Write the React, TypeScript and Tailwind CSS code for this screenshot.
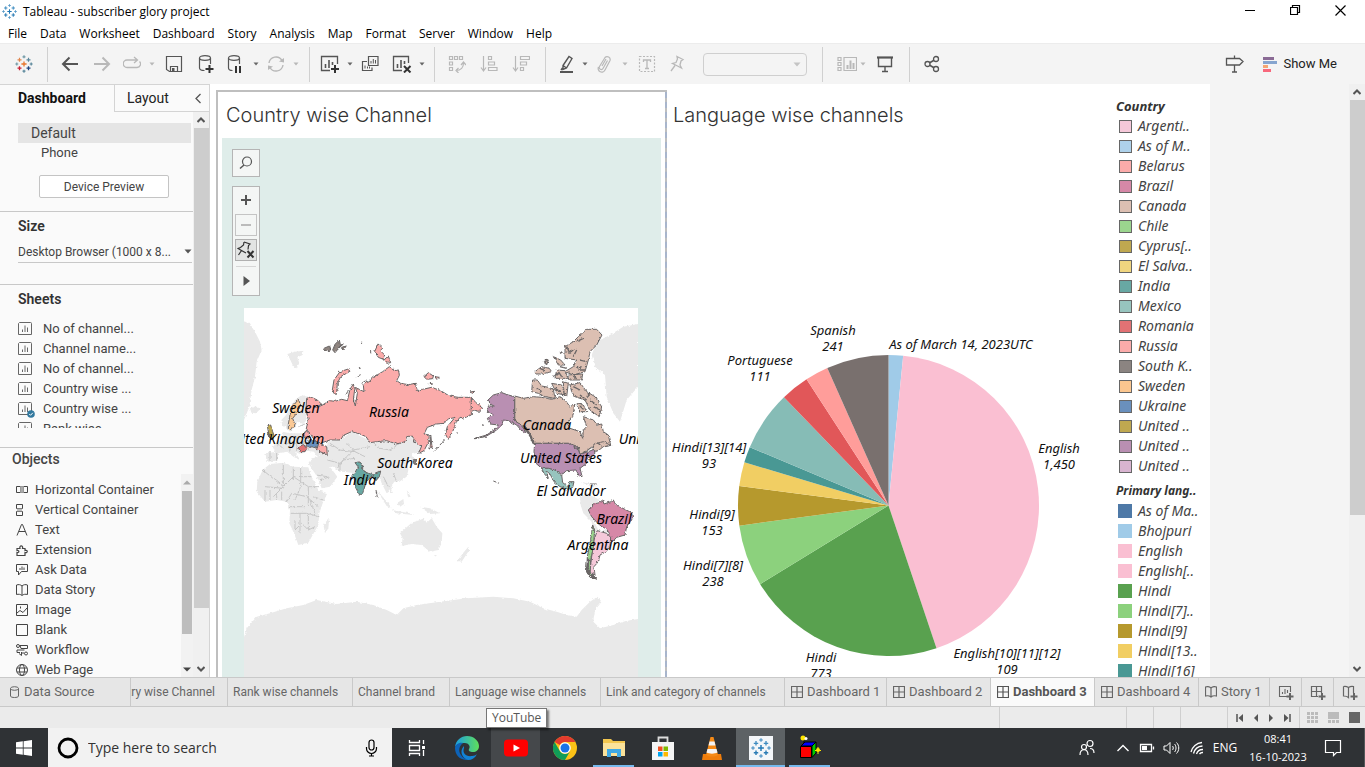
import React from "react";

const ui = "font-['Open_Sans','Noto_Sans',sans-serif]";
const book = "font-['Roboto','Inter',sans-serif]";
const heading = "font-['Inter','Roboto',sans-serif]";

function Svg({ w = 18, h = 18, className = "", children }: { w?: number; h?: number; className?: string; children: React.ReactNode }) {
  return (
    <svg width={w} height={h} viewBox={`0 0 ${w} ${h}`} fill="none" stroke="currentColor" aria-hidden="true" className={"shrink-0 " + className}>
      {children}
    </svg>
  );
}

/* ---------- Tableau mark ---------- */
function plus(x: number, y: number, r: number) {
  return `M${x - r} ${y}H${x + r}M${x} ${y - r}V${y + r}`;
}
function TableauMark({ colors, size = 18 }: { colors: string[]; size?: number }) {
  return (
    <svg width={size} height={size} viewBox="0 0 18 18" fill="none" aria-hidden="true" className="shrink-0">
      <path d={plus(9, 9, 2.6)} stroke={colors[0]} strokeWidth="1.3" />
      <path d={plus(4.5, 4.8, 2)} stroke={colors[1]} strokeWidth="1.2" />
      <path d={plus(13.5, 4.8, 2)} stroke={colors[2]} strokeWidth="1.2" />
      <path d={plus(4.5, 13.2, 2)} stroke={colors[3]} strokeWidth="1.3" />
      <path d={plus(13.5, 13.2, 2)} stroke={colors[4]} strokeWidth="1.3" />
      <path d={plus(9, 1.8, 1.5) + plus(1.8, 9, 1.5)} stroke={colors[5]} strokeWidth="1.2" />
      <path d={plus(9, 16.2, 1.5) + plus(16.2, 9, 1.5)} stroke={colors[6]} strokeWidth="1.2" />
    </svg>
  );
}
const blueMark = ["#1f77b4", "#3f8cc0", "#3f8cc0", "#2b7cb5", "#2b7cb5", "#5b9bc8", "#5b9bc8"];
const colorMark = ["#e8762c", "#e0874f", "#5b879b", "#c72035", "#1f447e", "#7199a6", "#59879b"];

/* ---------- Toolbar ---------- */
function Tool({ label, dim, className = "w-8", children }: { label: string; dim?: boolean; className?: string; children: React.ReactNode }) {
  return (
    <button aria-label={label} disabled={dim} className={`flex h-10 shrink-0 items-center justify-center ${dim ? "text-[#b8b8b8]" : "text-[#555]"} ${className}`}>
      {children}
    </button>
  );
}
function Caret({ dim, className = "" }: { dim?: boolean; className?: string }) {
  return (
    <button aria-label="More options" disabled={dim} className={`flex h-10 w-3 shrink-0 items-center justify-center ${dim ? "text-[#b8b8b8]" : "text-[#666]"} ${className}`}>
      <Svg w={6} h={4}><path d="M0.5 0.5h5L3 3.5z" fill="currentColor" stroke="none" /></Svg>
    </button>
  );
}
const Sep = ({ className }: { className: string }) => <div className={`h-[35px] w-px shrink-0 bg-[#d0d0d0] ${className}`} />;

function Toolbar() {
  return (
    <div className="flex h-[41px] shrink-0 items-center border-t border-[#ececec] bg-[#f4f4f4]">
      <Tool label="Start page" className="w-[47px]"><TableauMark colors={colorMark} /></Tool>
      <Sep className="mr-1.5" />
      <Tool label="Undo"><Svg><path d="M17 9H2M8.5 2.500L2 9l6.500 6.500" strokeWidth="2" /></Svg></Tool>
      <Tool label="Redo" dim><Svg><path d="M1 9h15M9.500 2.500L16 9l-6.500 6.500" strokeWidth="2" /></Svg></Tool>
      <Tool label="Replay" dim className="w-7"><Svg><path d="M8 5H4a3.500 3.500 0 0 0 0 7.500h10A3.500 3.500 0 0 0 16.500 6.500M6 5h8M11 2l3.500 3L11 8" strokeWidth="1.300" /></Svg></Tool>
      <Caret dim />
      <Tool label="Save"><Svg><path d="M1.500 1.500h15v15h-12l-3-2z M5.500 16v-4.500h7V16" strokeWidth="1.200" /><path d="M7 13h2.500v3H7z" fill="currentColor" stroke="none" /></Svg></Tool>
      <Tool label="New data source"><Svg><ellipse cx="8" cy="3" rx="5.500" ry="2.300" strokeWidth="1.200" /><path d="M2.500 3v10c0 1.500 2.500 2.500 5 2.500M13.500 3v6" strokeWidth="1.200" /><path d="M8.500 14h8M12.500 10v8" stroke="#333" strokeWidth="2" /></Svg></Tool>
      <Tool label="Pause auto updates" className="w-7"><Svg><ellipse cx="7" cy="3" rx="5.500" ry="2.300" strokeWidth="1.200" /><path d="M1.500 3v10c0 1.500 2 2.500 4 2.500M12.500 3v6" strokeWidth="1.200" /><path d="M9 11v7M13 11v7" stroke="#333" strokeWidth="2" /></Svg></Tool>
      <Caret />
      <Tool label="Run update" dim className="w-7"><Svg><path d="M2 8a7 7 0 0 1 13-2.500M16 10a7 7 0 0 1-13 2.500" strokeWidth="1.400" /><path d="M12 6.500l5 1V3zM6 11.500l-5-1V15z" fill="currentColor" stroke="none" /></Svg></Tool>
      <Caret dim />
      <Sep className="mr-1.5 ml-[7px]" />
      <Tool label="New worksheet" className="w-7"><Svg w={20} h={18}><path d="M10 15.500H1.500v-14h16V9" strokeWidth="1.300" /><path d="M5.500 13V9M9 13V5M12.500 10V7" strokeWidth="1.600" /><path d="M11 14h8M15 10v8" stroke="#333" strokeWidth="2" /></Svg></Tool>
      <Caret />
      <Tool label="Duplicate sheet" className="w-7"><Svg><path d="M7.500 1.500h9.500v9H7.500z M6 6.500H1.500v9h9.500V12.500" strokeWidth="1.200" /><path d="M10 8.500V6M12.300 8.500V4M14.500 8.500V5M4 13.500v-3M6.500 13.500v-2M8.500 13.500v-2" /></Svg></Tool>
      <Tool label="Clear sheet" className="ml-1 w-7"><Svg w={20} h={18}><path d="M10 15.500H1.500v-14h15V8" strokeWidth="1.300" /><path d="M5.500 13V9M9 13V5M12.500 9V6" strokeWidth="1.600" /><path d="M12 11l6.500 6.500M18.500 11L12 17.500" stroke="#333" strokeWidth="2" /></Svg></Tool>
      <Caret />
      <Sep className="mr-1.5 ml-1.5" />
      <Tool label="Swap rows and columns" dim><Svg><path d="M1.500 1.500h3v3h-3zM6.500 1.500h3v3h-3zM11.500 1.500h3v3h-3zM1.500 7h3v3h-3zM1.500 12.500h3v3h-3z M8 15.500c5 0 7.500-3 7.500-7.500M13 10l2.500-3L18 10M10.500 13L8 15.500l2.500 2.500" strokeWidth="1.200" /></Svg></Tool>
      <Tool label="Sort ascending" dim><Svg><path d="M3.500 1v14M1 12.500L3.500 16 6 12.500M8.500 1.500h3v3h-3zM8.500 7h6v3h-6zM8.500 12.500h8.500v3H8.500z" strokeWidth="1.200" /></Svg></Tool>
      <Tool label="Sort descending" dim><Svg><path d="M3.500 1v14M1 12.500L3.500 16 6 12.500M8.500 1.500h9v3h-9zM8.500 7h6v3h-6zM8.500 12.500h3v3h-3z" strokeWidth="1.200" /></Svg></Tool>
      <Sep className="mr-2 ml-2" />
      <Tool label="Highlight" className="w-7"><Svg><path d="M4 10.500L10 1.500l3 2-5.500 9.500-3.500 1.500zM4 10.500l3.500 2.500M3.500 13L2 15" strokeWidth="1.400" /><path d="M1 17h13" strokeWidth="2" /></Svg></Tool>
      <Caret className="-ml-[3px]" />
      <Tool label="Group members" dim className="w-7"><Svg><path d="M11.500 5.500l-4.500 8a2 2 0 0 1-3.500-2l5.500-9a3 3 0 0 1 5 3L9 15a3.500 3.500 0 0 1-6.500-3M6 11l4-7" strokeWidth="1.200" /></Svg></Tool>
      <Caret dim />
      <Tool label="Show mark labels" dim><Svg><path d="M1.500 1.500h15v15h-15z" strokeDasharray="2 1.500" strokeWidth="1.200" /><path d="M5.500 7V5h7v2M9 5v8.500M7 13.500h4" strokeWidth="1.300" /></Svg></Tool>
      <Tool label="Fix axes" dim className="w-7"><Svg><path d="M9 1.500l6 3-2 1.500-1 4 1.500 3-4-2-5-2.500 3.500-1L9.500 4zM7 10.500L3 16" strokeWidth="1.300" /></Svg></Tool>
      <select aria-label="Fit" disabled className="ml-3 h-[23px] w-[104px] shrink-0 appearance-none rounded-sm border border-[#cfcfcf] bg-[#f4f4f4]" />
      <svg width="8" height="5" viewBox="0 0 8 5" aria-hidden="true" className="-ml-3.5 shrink-0"><path d="M0.500 0.500h7L4 4.500z" fill="#c4c4c4" /></svg>
      <Sep className="mr-2.5 ml-[21px]" />
      <Tool label="Show or hide cards" dim className="w-7"><Svg w={20} h={16}><path d="M1 1.500h3v3H1zM1 6.500h3v3H1zM1 11.500h3v3H1zM7 1.500h12.500v13H7z" strokeWidth="1.200" /><path d="M10.500 13V9M13.500 13V4.500M16.500 13V7" strokeWidth="2" /></Svg></Tool>
      <Caret dim className="-ml-1" />
      <Tool label="Presentation mode"><Svg><path d="M2.500 2.500v9h13v-9M9 12v4.500M6 16.500h6" strokeWidth="1.400" /><path d="M1 2.500h16" strokeWidth="2.200" /></Svg></Tool>
      <Sep className="mr-1.5 ml-2" />
      <Tool label="Share workbook"><Svg w={16} h={18}><circle cx="3.500" cy="9" r="2.500" strokeWidth="1.300" /><circle cx="12" cy="4" r="2.500" strokeWidth="1.300" /><circle cx="12" cy="14" r="2.500" strokeWidth="1.300" /><path d="M5.700 7.700L10 5.300M5.700 10.300l4.300 2.400" strokeWidth="1.600" /></Svg></Tool>
      <div className="flex-1" />
      <Tool label="Data guide" className="w-8"><Svg w={20} h={18}><path d="M1.500 3.500h13l3.500 3-3.500 3.500h-13zM9.500 0.500v3M9.500 10v7M7 17h5" strokeWidth="1.300" /></Svg></Tool>
      <button className={`${book} mr-7 ml-3 flex h-10 items-center gap-1.5 text-[13px] text-[#222]`}>
        <Svg w={14} h={15}><path d="M0 1.500h11" stroke="#8a6a95" strokeWidth="3" /><path d="M0 5.500h14" stroke="#86a5cf" strokeWidth="3" /><path d="M0 9.500h5" stroke="#f5a673" strokeWidth="3" /><path d="M0 13.500h8" stroke="#f8687c" strokeWidth="3" /></Svg>
        Show Me
      </button>
    </div>
  );
}

/* ---------- Scrollbar ---------- */
function ScrollBar({ thumb }: { thumb: string }) {
  return (
    <div className="flex w-4 shrink-0 flex-col items-center bg-[#f0f0f0]">
      <div className="flex h-4 items-center text-[#555]"><Svg w={8} h={6}><path d="M0.500 5L4 1.500 7.500 5" strokeWidth="2" /></Svg></div>
      <div className="flex w-[15px] flex-1 flex-col"><div className={`bg-[#cdcdcd] ${thumb}`} /></div>
      <div className="flex h-4 items-center text-[#555]"><Svg w={8} h={6}><path d="M0.500 1L4 4.500 7.500 1" strokeWidth="2" /></Svg></div>
    </div>
  );
}

/* ---------- Left panel ---------- */
const sheets = ["No of channel...", "Channel name...", "No of channel...", "Country wise ...", "Country wise ...", "Rank wise ..."];

const objects: [string, React.ReactNode][] = [
  ["Horizontal Container", <Svg w={12} h={12}><path d="M.5 2.500h4v6h-4zM7.500 2.500h4v6h-4z" /><path d="M4.500 2.500h3v6h-3z" fill="#aaa" stroke="#999" /></Svg>],
  ["Vertical Container", <Svg w={12} h={12}><path d="M.5.5h6v4h-6zM.5 7.500h6v4h-6z" /><path d="M1 4.500h5v3H1z" fill="#bbb" stroke="none" /></Svg>],
  ["Text", <Svg w={12} h={12}><path d="M1 11.500L5.500.5h1L11 11.500M3 7.500h6" /></Svg>],
  ["Extension", <Svg w={12} h={12}><path d="M1 4.500h3C3 1 7.500 1 6.500 4.500H9v2c3-1 3 3 0 2v3H1v-3c2.500.5 2.500-2.500 0-2z" strokeWidth="1.200" /></Svg>],
  ["Ask Data", <Svg w={12} h={12}><path d="M.5.5h11v7h-6l-3 3.500v-3.500h-2z" /><path d="M4 6V4M6 6V2.500M8 6V3.500" /></Svg>],
  ["Data Story", <Svg w={12} h={12}><path d="M.5 1c2-.7 4-.5 5.500 1 1.500-1.500 3.500-1.700 5.500-1v9.500c-2-.5-4-.3-5.500 1-1.500-1.300-3.500-1.500-5.500-1zM6 2v9" /></Svg>],
  ["Image", <Svg w={12} h={12}><path d="M.5.5h11v11H.5zM1 9l3-2.500 3 2 4-4.500" /><path d="M4 3.500h1" strokeWidth="2" /></Svg>],
  ["Blank", <Svg w={12} h={12}><path d="M.5.5h11v11H.5z" /></Svg>],
  ["Workflow", <Svg w={12} h={12}><circle cx="2" cy="2" r="1.500" /><circle cx="10" cy="9.500" r="1.500" /><path d="M4 1.500h7.500v3H5zM1 6h7.500M1 6v2.500h3M5.500 8v3.500L3 9.500M5.500 9H8" /></Svg>],
  ["Web Page", <Svg w={12} h={12}><circle cx="6" cy="6" r="5.500" /><ellipse cx="6" cy="6" rx="2.500" ry="5.500" /><path d="M1 4h10M1 8h10" /></Svg>],
];

function LeftPanel() {
  return (
    <aside className={`${book} flex w-[210px] shrink-0 flex-col overflow-hidden border-t border-r border-[#d4d4d4] bg-[#fafafa] text-[#444]`}>
      <div className="flex h-[27px] shrink-0">
        <button className="w-[114px] pb-0.5 pl-[18px] text-left text-sm font-bold text-[#111]">Dashboard</button>
        <div className="flex flex-1 items-center justify-between border-b border-l border-[#d4d4d4] pr-2 pl-3">
          <button className="text-sm text-[#222]">Layout</button>
          <button aria-label="Collapse pane" className="text-[#555]"><Svg w={6} h={11}><path d="M5.500 1L1 5.500l4.500 4.500" strokeWidth="1.300" /></Svg></button>
        </div>
      </div>
      <div className="flex min-h-0 flex-1">
        <div className="flex min-w-0 flex-1 flex-col">
          <div className="shrink-0 border-b border-[#c8c8c8] pt-[11px] pb-[13px]">
            <button className="ml-[18px] block h-5 w-[173px] bg-[#e5e5e5] pl-[13px] text-left text-sm leading-5">Default</button>
            <button className="ml-[18px] block h-5 pl-[23px] text-[13px] leading-5">Phone</button>
            <button className="mt-3 ml-[39px] block h-[23px] w-[130px] rounded-xs border border-[#c4c4c4] bg-white text-xs">Device Preview</button>
          </div>
          <div className="h-[73px] shrink-0 border-b border-[#c8c8c8] pt-[5px] pl-[18px]">
            <label htmlFor="size" className="block text-sm leading-[18px] font-semibold text-[#333]">Size</label>
            <div className="mt-1.5 mr-px flex h-[22px] items-center border-b border-[#c8c8c8]">
              <select id="size" className="min-w-0 flex-1 appearance-none text-xs leading-5">
                <option>Desktop Browser (1000 x 8...</option>
              </select>
              <Svg w={8} h={5}><path d="M.5.5h7L4 4.500z" fill="#555" stroke="none" /></Svg>
            </div>
          </div>
          <div className="flex h-[163px] shrink-0 flex-col border-b border-[#c8c8c8] pt-[5px] pl-[18px]">
            <h2 className="text-sm leading-[18px] font-semibold text-[#333]">Sheets</h2>
            <ul className="mt-[11px] h-[109px] overflow-hidden">
              {sheets.map((s, i) => (
                <li key={i} className="flex h-5 items-center gap-[11px] text-[13px]">
                  <Svg w={14} h={14} className="overflow-visible">
                    <path d="M1.500.5h11a1 1 0 0 1 1 1v11h-13v-11z" stroke="#666" />
                    <path d="M4.500 10V7.500M7 10V3.500M9.500 10V5.500" stroke="#666" />
                    {i === 4 && <g><circle cx="13" cy="12" r="3.800" fill="#31789e" stroke="none" /><path d="M11.300 12l1.200 1.300 2.300-2.500" stroke="#fff" /></g>}
                  </Svg>
                  {s}
                </li>
              ))}
            </ul>
          </div>
          <div className="flex min-h-0 flex-1 flex-col">
            <h2 className="h-[26px] shrink-0 pt-0.5 pl-3 text-sm leading-[18px] font-medium text-[#444]">Objects</h2>
            <div className="flex min-h-0 flex-1">
              <ul className="min-w-0 flex-1 overflow-hidden pt-1.5">
                {objects.map(([n, icon]) => (
                  <li key={n} className="flex h-5 items-center gap-[7px] pl-4 text-[13px]">{icon}<span>{n}</span></li>
                ))}
              </ul>
              <div className="flex w-3 flex-col items-center bg-[#f2f2f2]">
                <div className="flex h-[17px] items-center"><Svg w={8} h={5}><path d="M0 4.500h8L4 .5z" fill="#aaa" stroke="none" /></Svg></div>
                <div className="flex w-2.5 flex-1 flex-col"><div className="h-[84%] bg-[#bdbdbd]" /></div>
                <div className="flex h-4 items-center"><Svg w={8} h={5}><path d="M0 .5h8L4 4.500z" fill="#444" stroke="none" /></Svg></div>
              </div>
            </div>
          </div>
        </div>
        <ScrollBar thumb="h-[90%]" />
      </div>
    </aside>
  );
}

/* ---------- World map (drawn at three units to the pixel) ---------- */
type Shape = [fill: string, d: string];

const baseLand: string[] = [
  "M0,60 L30,70 38,85 45,95 60,125 65,150 50,185 45,230 35,270 28,320 12,360 0,360Z",
  "M30,325 L50,318 60,328 48,340 34,338Z",
  "M142,162 L165,155 190,152 188,165 172,172 178,190 168,206 158,195 150,178Z",
  "M124,360 L138,345 150,325 165,300 185,285 202,290 200,340 198,362 190,372 172,365 165,385 150,395 140,385 128,378Z",
  "M128,395 L150,400 200,400 215,430 240,450 262,465 232,470 222,455 200,452 180,462 165,455 180,480 160,470 142,455 115,460 110,482 80,485 76,460 105,456 98,440 115,425 128,412Z",
  "M240,445 L262,462 262,425 305,418 335,395 385,420 392,428 440,424 495,428 505,408 522,415 545,440 532,458 515,462 528,480 530,495 520,490 512,475 500,480 505,510 500,530 478,545 462,545 455,560 440,580 425,550 418,530 385,520 362,585 345,545 335,518 305,515 290,508 270,500 292,530 270,560 245,565 228,525 205,490 215,475 240,470Z",
  "M68,510 L90,492 130,488 160,500 205,502 215,530 235,570 262,580 248,610 238,640 235,675 205,728 175,735 162,700 148,670 150,630 140,605 110,600 75,605 50,575 52,545Z",
  "M250,672 L268,656 265,685 255,700Z",
  "M480,700 L515,668 540,660 552,655 560,668 575,655 590,680 607,700 605,730 595,750 570,755 545,735 515,732 485,738 488,715Z",
  "M583,765 L590,765 586,773Z M670,758 L685,740 688,750 665,785 652,782Z",
  "M410,570 L445,610 455,625 440,618Z M470,610 L490,597 492,612 480,620Z M455,630 L510,640 520,645 470,640Z M540,620 L570,625 600,640 570,642Z M500,570 L512,590 505,592Z M444,545 L458,570 455,580 446,565Z",
  "M1194,72 L1150,80 1110,105 1070,125 1055,165 1065,200 1095,225 1100,290 1120,340 1140,365 1160,300 1194,260Z",
  "M1020,590 L1040,580 1080,600 1060,615 1045,630 1060,660 1075,690 1100,690 1105,705 1060,700 1055,665 1030,640 1022,615Z M1020,545 L1075,555 1060,562Z",
  "M0,1020 L12,1012 20,985 50,950 90,940 140,925 190,915 230,900 290,912 350,905 400,915 440,930 470,945 490,925 530,915 600,905 680,895 760,890 820,895 870,905 910,925 950,935 980,945 1010,950 1025,930 1050,905 1072,890 1085,905 1065,930 1060,965 1080,985 1120,975 1160,962 1210,955 1210,1145 0,1145Z",
];

const baseBorders =
  "M68,510L130,560 160,530 205,560 240,560M130,488V560L100,590M160,500V540M182,502V560L165,600M205,560V620M75,560L130,565M75,605V570M90,600V570M110,600V580M125,600V575M140,605L155,580 200,590 235,620M150,640L200,640 238,650M150,620H195M165,690L185,670 205,690 225,680M165,660V690M180,640V700M205,640V690M220,590L250,600M210,600L225,640M215,530L180,530M228,525L262,530M262,480L300,490 320,470 340,450 390,440M290,508L310,480 345,475M270,430L300,450 345,455M320,430L345,455 375,470M400,428L420,445 450,450 480,430M460,520L470,545M430,530L445,560M150,455V410M170,455V405M190,450V420M165,430H215M110,482V460M110,430L130,445M135,430H160M175,380L195,372M90,455V482M240,540L270,530M300,490V515";

const colored: Shape[] = [
  ["#fbabaa", "M200,295 L212,291 232,300 244,312 230,322 246,316 268,302 285,304 305,298 322,302 330,268 340,252 344,268 340,300 346,318 352,280 346,262 358,268 372,275 370,255 400,232 428,215 448,200 462,212 476,210 478,226 470,242 482,250 505,254 526,250 532,272 548,268 575,262 602,272 628,288 655,292 694,292 694,345 672,354 660,352 648,368 638,395 625,418 616,402 622,380 645,352 626,356 612,370 590,372 562,382 552,402 568,405 566,425 552,452 536,460 545,438 528,430 517,408 500,410 495,425 470,432 440,422 410,425 390,428 378,410 360,402 335,395 310,406 302,420 270,420 240,430 260,440 262,464 240,455 228,448 236,430 222,418 206,395 198,390 205,360 198,330Z"],
  ["#fbabaa", "M694,292 L708,308 728,325 718,334 702,330 694,335Z"],
  ["#fbabaa", "M288,285 L277,270 282,240 300,215 328,206 330,214 302,230 292,250 290,275Z"],
  ["#fbabaa", "M404,155 L414,132 424,140 424,155 434,165 430,178 415,172Z M434,178 L445,168 452,188 440,190Z M552,230 L565,218 580,228 578,236 560,238Z M585,230 L598,232 590,238Z M690,276 L704,274 698,280Z M568,250 L578,252 568,254Z"],
  ["#fbabaa", "M572,405 L576,440 570,448 572,420Z"],
  ["#8f8580", "M252,145 L268,138 272,150 258,154Z M278,150 L285,133 298,120 302,138 310,132 296,145 285,158Z M305,142L320,138 308,150Z"],
  ["#fbc995", "M145,372 L150,345 158,320 175,298 182,315 170,340 158,355 165,375 152,392 145,385Z"],
  ["#6a90bd", "M198,430 L212,418 236,428 232,445 215,440 205,442Z"],
  ["#e27274", "M175,440 L190,434 202,442 195,455 180,455Z"],
  ["#fbabaa", "M190,402 L198,392 210,402 205,415 195,415Z"],
  ["#bfa850", "M82,378 L92,375 98,395 104,412 94,420 86,400Z M80,400 L86,395 86,408Z"],
  ["#68a8a3", "M345,488 L360,486 368,498 368,512 385,520 400,524 408,518 422,513 418,530 408,542 400,530 392,530 378,548 368,580 360,587 348,565 344,540 335,528 345,518 354,500Z"],
  ["#8f8580", "M520,482 L528,482 530,494 522,492Z"],
  ["#dcbfb2", "M824,288 L850,295 880,290 905,292 935,298 960,290 975,300 990,320 1005,312 998,350 982,370 990,385 1020,395 1028,415 1030,390 1040,380 1030,350 1060,360 1072,375 1085,372 1090,395 1105,405 1112,436 1095,440 1078,432 1062,440 1050,445 1020,465 1015,440 985,430 884,430 870,405 850,380 824,363Z"],
  ["#dcbfb2", "M878,240 L892,240 905,258 925,262 940,268 945,295 915,290 895,280 875,275Z M990,255 L1020,248 1040,275 1065,290 1085,320 1078,350 1050,330 1035,300 1005,290 995,275Z"],
  ["#dcbfb2", "M1015,110 L1040,88 1070,88 1086,105 1070,135 1050,155 1045,180 1035,215 1000,225 975,215 1000,200 1010,180 975,175 975,140 1000,125Z"],
  ["#dcbfb2", "M885,215 L905,200 928,205 935,215 905,222 888,222Z M940,170 L962,180 975,195 955,195Z M910,185 L925,180 920,195Z M950,210 L975,212 985,235 945,235Z M985,225 L1028,222 1025,240 990,240Z M935,250 L965,255 975,285 950,280Z M970,245 L985,250 980,290 972,285Z M1010,312 L1030,315 1040,335 1020,335Z"],
  ["#dcbfb2", "M1062,432 L1090,425 1112,436 1090,440 1075,452 1058,455Z"],
  ["#b98fb2", "M824,290 V363 L840,372 858,395 850,398 830,375 805,362 790,360 785,375 770,390 740,408 702,416 740,405 765,388 775,375 750,372 742,355 760,345 740,330 748,318 760,318 742,302 760,285 785,278 805,285Z"],
  ["#b98fb2", "M884,430 H985 L1010,440 1020,462 1045,455 1062,448 1065,460 1045,475 1040,490 1020,505 1025,525 1018,528 1008,510 980,512 968,522 950,512 925,505 905,505 888,490 882,455Z"],
  ["#97c4be", "M905,505 L925,505 950,512 965,525 968,548 985,560 990,545 1002,545 998,562 985,568 960,560 942,545 930,522 918,512 925,535 912,520Z"],
  ["#d688a7", "M1045,630 L1062,612 1078,608 1088,600 1092,612 1112,605 1120,600 1128,615 1175,638 1178,655 1160,680 1155,705 1130,712 1115,728 1100,715 1108,700 1100,688 1075,672 1055,650Z"],
  ["#f5c8d9", "M1072,692 L1100,700 1112,712 1110,740 1098,755 1080,765 1075,785 1062,800 1065,825 1050,815 1055,770 1062,720Z"],
  ["#9bd58e", "M1058,675 L1064,690 1060,740 1052,780 1050,815 1068,835 1050,832 1040,815 1042,770 1052,720Z"],
];

const mapLabels: [string, number, number][] = [
  ["Sweden", 296, 413], ["United Kingdom", 274, 444], ["Russia", 389, 417], ["South Korea", 415, 468], ["India", 360, 485],
  ["Canada", 547, 430], ["United States", 561, 463], ["El Salvador", 571, 496], ["Brazil", 614, 524], ["Argentina", 598, 550], ["United Kingdom", 669, 444],
];

function WorldMap() {
  return (
    <svg viewBox="244 308 394 369" className="block w-full" role="img" aria-label="Map of countries by number of channels">
      <defs>
        <filter id="coast" x="-5%" y="-5%" width="110%" height="110%" colorInterpolationFilters="sRGB">
          <feTurbulence type="fractalNoise" baseFrequency="0.12" numOctaves="2" seed="4" result="n" />
          <feDisplacementMap in="SourceGraphic" in2="n" scale="9" xChannelSelector="R" yChannelSelector="G" />
        </filter>
      </defs>
      <rect x="244" y="308" width="394" height="369" fill="#fff" />
      <g transform="translate(240 300) scale(0.33333)">
        <g filter="url(#coast)">
          {baseLand.map((d, i) => <path key={i} d={d} fill="#e9e9e9" />)}
          <path d={baseBorders} fill="none" stroke="#c6c6c6" strokeWidth="3" strokeLinejoin="round" />
        </g>
        <g filter="url(#coast)" stroke="#696565" strokeWidth="3" strokeLinejoin="round">
          {colored.map(([fill, d], i) => <path key={i} d={d} fill={fill} />)}
          <path d="M850,375 L870,405 882,432M1045,775 L1042,815 1055,832M1040,800 L1050,828 1070,835" fill="none" strokeWidth="7" />
          <path d="M585,452 L600,435 615,418M702,416 L735,410M760,543 L778,550M408,570 L412,592M350,230 L362,224M395,240 L382,248M650,398 L655,400M730,378 L728,372M1050,552H1070M1020,465L1040,455 1055,440M1000,440L1015,450M325,270L318,285M365,250L380,240M355,205H362M365,125V130M392,152V160" fill="none" />
          <path d="M968,155 L960,160M950,180 L945,172M960,200 L980,205M985,160 L1000,150M1005,205 L1025,200M1000,170 L1010,150M940,230 L955,220M1050,300 L1070,315M1060,320 L1080,330M1040,290 L1050,280M1000,260L1020,270M1020,285L1040,300M980,140L990,160M1010,125L1030,115M1020,180L1040,185M1015,210H1035M900,205L915,212M920,180L915,190M955,215L965,230M1000,228L1010,236M890,265L905,275M945,265L960,275M1020,318L1030,328M1075,430L1085,440" fill="none" strokeWidth="4" />
        </g>
      </g>
      <g className="font-['Noto_Sans','Open_Sans',sans-serif] italic" fontSize="14" fill="#000" textAnchor="middle">
        {mapLabels.map(([t, x, y], i) => <text key={i} x={x} y={y}>{t}</text>)}
      </g>
    </svg>
  );
}

/* ---------- Pie ---------- */
const slices: [number, string][] = [
  [5.6, "#a0cbe8"], [161.4, "#fabfd2"], [238.5, "#59a14f"], [262.3, "#8cd17d"], [277.4, "#b6992d"], [286.7, "#f1ce63"],
  [292.8, "#499894"], [316, "#86bcb6"], [327, "#e15759"], [336, "#ff9d9a"], [360, "#79706e"],
];
const pieLabels: [string, number, number, string?][] = [
  ["Spanish", 833, 335, "241"], ["Portuguese", 760, 365, "111"], ["Hindi[13][14]", 709, 452, "93"], ["Hindi[9]", 712, 519, "153"],
  ["Hindi[7][8]", 713, 570, "238"], ["Hindi", 821, 662, "773"], ["English[10][11][12]", 1007, 658, "109"], ["English", 1059, 453, "1,450"],
  ["As of March 14, 2023UTC", 961, 349],
];
function PieChart() {
  const cx = 888.5, cy = 505.5, r = 150.5;
  const pt = (a: number) => `${cx + r * Math.sin((a * Math.PI) / 180)} ${cy - r * Math.cos((a * Math.PI) / 180)}`;
  return (
    <svg viewBox="667 138 443 539" className="block w-full" role="img" aria-label="Channels by primary language">
      {slices.map(([end, fill], i) => {
        const start = i ? slices[i - 1][0] : 0;
        return <path key={i} fill={fill} d={`M${cx} ${cy}L${pt(start)}A${r} ${r} 0 ${end - start > 180 ? 1 : 0} 1 ${pt(end)}Z`} />;
      })}
      <g className="font-['Noto_Sans','Open_Sans',sans-serif] italic" fontSize="13" fill="#111" textAnchor="middle">
        {pieLabels.map(([t, x, y, v]) => (
          <React.Fragment key={t}>
            <text x={x} y={y}>{t}</text>
            {v && <text x={x} y={y + 16}>{v}</text>}
          </React.Fragment>
        ))}
      </g>
    </svg>
  );
}

/* ---------- Legends ---------- */
const countries: [string, string][] = [
  ["Argenti..", "#f5c8d9"], ["As of M..", "#aed1ea"], ["Belarus", "#fbabaa"], ["Brazil", "#d688a7"], ["Canada", "#dcbfb2"], ["Chile", "#9bd58e"],
  ["Cyprus[..", "#bfa850"], ["El Salva..", "#f0d57f"], ["India", "#68a8a3"], ["Mexico", "#97c4be"], ["Romania", "#e27274"], ["Russia", "#fbabaa"],
  ["South K..", "#8b8481"], ["Sweden", "#fbc68f"], ["Ukraine", "#6a90bd"], ["United ..", "#bfa850"], ["United ..", "#b98fb2"], ["United ..", "#d8b4d0"],
];
const languages: [string, string][] = [
  ["As of Ma..", "#4e79a7"], ["Bhojpuri", "#a0cbe8"], ["English", "#fabfd2"], ["English[..", "#fabfd2"], ["Hindi", "#59a14f"],
  ["Hindi[7]..", "#8cd17d"], ["Hindi[9]", "#b6992d"], ["Hindi[13..", "#f1ce63"], ["Hindi[16]", "#499894"],
];
function Legend({ title, titleSize, items, outlined }: { title: string; titleSize: string; items: [string, string][]; outlined?: boolean }) {
  return (
    <section className="shrink-0">
      <h3 className={`h-5 leading-5 font-bold text-[#333] ${titleSize}`}>{title}</h3>
      <ul>
        {items.map(([n, c], i) => (
          <li key={i} className="flex h-5 items-center gap-1.5 pl-0.5 text-sm text-[#444]">
            <span className={outlined ? "ml-px size-[13px] border border-[#666]" : "size-[14px]"} style={{ backgroundColor: c }} />
            {n}
          </li>
        ))}
      </ul>
    </section>
  );
}

function MapControls() {
  return (
    <div className="absolute top-[11px] left-2.5 flex flex-col gap-[9px] text-[#555]">
      <button aria-label="Search map" className="flex size-7 items-center justify-center border border-[#b5b5b5] bg-[#f4f6f5]">
        <Svg w={14} h={14}><circle cx="8" cy="5.500" r="4.500" strokeWidth="1.200" /><path d="M5 9l-4 3.500" strokeWidth="1.500" /></Svg>
      </button>
      <div className="flex h-[110px] w-7 flex-col items-center border border-[#b5b5b5] bg-[#f4f6f5] pt-0.5">
        <button aria-label="Zoom in" className="flex h-[22px] w-[22px] items-center justify-center"><Svg w={10} h={10}><path d="M0 5h10M5 0v10" strokeWidth="2" /></Svg></button>
        <button aria-label="Zoom out" className="mt-[3px] flex size-[22px] items-center justify-center border border-[#c4c4c4] text-[#bbb]"><Svg w={10} h={10}><path d="M0 5h10" strokeWidth="2" /></Svg></button>
        <button aria-label="Reset view" className="mt-[3px] flex size-[22px] items-center justify-center border border-[#b0b0b0] bg-[#e2e4e3] text-[#333]"><Svg><path d="M7 1l6 2-1.500 1.500-.5 4M7 1l-.5 3L3.500 6.500 1 7.500l3.500 2 4.500 2.500M4.500 9.500L1.500 14" strokeWidth="1.200" /><path d="M10.500 10l6 6.500M16.500 10l-6 6.500" strokeWidth="2" /></Svg></button>
        <div className="mt-[5px] h-px w-5 bg-[#d6d6d6]" />
        <button aria-label="Map tools" className="flex w-[22px] flex-1 items-center justify-center"><Svg w={7} h={10}><path d="M.5 0v10L7 5z" fill="currentColor" stroke="none" /></Svg></button>
      </div>
    </div>
  );
}

function Canvas() {
  return (
    <main className="flex min-w-0 flex-1 bg-[#f4f4f4]">
      <div className="flex min-w-0 flex-1">
        <div className="flex w-full max-w-[1000px] overflow-hidden bg-white pt-1.5 pl-1.5">
          <section className="relative flex w-[451px] shrink-0 flex-col border-2 border-b-0 border-[#bfbfbf] px-1">
            <h2 className={`${heading} h-[46px] shrink-0 pl-1 text-xl leading-[46px] font-light text-[#333]`}>Country wise Channel</h2>
            <div className="relative min-h-0 flex-1 overflow-hidden bg-[#dfedea] pt-[170px] pr-[23px] pl-[22px]">
              <MapControls />
              <WorldMap />
            </div>
            <div className="absolute top-0 -right-0.5 bottom-0 w-0 border-r-2 border-dashed border-[#a8b5cc]" />
          </section>
          <section className="flex min-w-0 flex-1 flex-col overflow-hidden">
            <h2 className={`${heading} h-12 shrink-0 pl-1.5 text-xl leading-[50px] font-light text-[#333]`}>Language wise channels</h2>
            <PieChart />
          </section>
          <aside className="flex w-[100px] shrink-0 flex-col gap-[5px] overflow-hidden pt-1.5 pl-1.5 font-['Noto_Sans','Open_Sans',sans-serif] italic">
            <Legend title="Country" titleSize="text-[13px]" items={countries} outlined />
            <Legend title="Primary lang.." titleSize="text-xs" items={languages} />
          </aside>
        </div>
      </div>
      <ScrollBar thumb="h-[74%]" />
    </main>
  );
}

/* ---------- Sheet tabs ---------- */
const GridIcon = () => <Svg w={12} h={12}><path d="M.5.5h11v11H.5zM6 .5v11M.5 6h11" strokeWidth="1.200" /></Svg>;
const BookIcon = () => <Svg w={12} h={12}><path d="M.5 1c2-.7 4-.5 5.500 1 1.500-1.500 3.500-1.700 5.500-1v9c-2-.5-4-.3-5.500 1-1.500-1.300-3.500-1.500-5.500-1zM6 2v9" strokeWidth="1.200" /></Svg>;

function Tab({ w, active, icon, children }: { w: string; active?: boolean; icon?: React.ReactNode; children: React.ReactNode }) {
  return (
    <button className={`flex shrink-0 items-center gap-1 overflow-hidden border-r border-[#c9c9c9] whitespace-nowrap ${active ? "bg-[#fafafa] font-bold text-[#555]" : "bg-[#e6e6e6] text-[#666]"} ${icon ? "pl-1.5 text-[13px]" : "pl-[5px] text-xs"} ${w}`}>
      {icon}
      {children}
    </button>
  );
}
function SheetTabs() {
  return (
    <nav aria-label="Sheets" className={`${book} flex h-[30px] shrink-0 overflow-hidden border-t border-b border-[#c9c9c9] bg-[#e6e6e6] text-[13px]`}>
      <button className="flex w-[131px] shrink-0 items-center gap-[5px] border-r border-[#c9c9c9] pl-2.5 text-[#666]">
        <Svg w={9} h={12}><ellipse cx="4.500" cy="2.500" rx="4" ry="1.800" /><path d="M.5 2.500v7.500c0 2 8 2 8 0V2.500" /></Svg>
        Data Source
      </button>
      <button className="flex w-[97px] shrink-0 items-center justify-end overflow-hidden border-r border-[#c9c9c9] pr-3 text-xs whitespace-nowrap text-[#666]">Country wise Channel</button>
      <Tab w="w-[125px]">Rank wise channels</Tab>
      <Tab w="w-[97px]">Channel brand</Tab>
      <Tab w="w-[151px]">Language wise channels</Tab>
      <Tab w="w-[184px]">Link and category of channels</Tab>
      <Tab w="w-[102px]" icon={<GridIcon />}>Dashboard 1</Tab>
      <Tab w="w-[104px]" icon={<GridIcon />}>Dashboard 2</Tab>
      <Tab w="w-[104px]" icon={<GridIcon />} active>Dashboard 3</Tab>
      <Tab w="w-[104px]" icon={<GridIcon />}>Dashboard 4</Tab>
      <Tab w="w-[71px]" icon={<BookIcon />}>Story 1</Tab>
      <button aria-label="New worksheet" className="flex w-8 shrink-0 items-center justify-center border-r border-[#c9c9c9] text-[#666]"><Svg w={16} h={15}><path d="M9 11.500H1.500v-10h11V7M4.500 9V7M7 9V4M9.500 8V5" strokeWidth="1.100" /><path d="M8.500 11.500h7M12 8v7" strokeWidth="2" /></Svg></button>
      <button aria-label="New dashboard" className="flex w-8 shrink-0 items-center justify-center border-r border-[#c9c9c9] text-[#666]"><Svg w={16} h={15}><path d="M8 11.500H1.500v-10h10V8M6.500 1.500v10M1.500 6.500h10" strokeWidth="1.200" /><path d="M8.500 11.500h7M12 8v7" strokeWidth="2" /></Svg></button>
      <button aria-label="New story" className="flex w-8 shrink-0 items-center justify-center text-[#666]"><Svg w={16} h={15}><path d="M1.500 1.500c2-.5 3.500 0 5 1 1.500-1 3-1.500 5-1V8M6.500 2.500v10c-1.500-1.500-3-1.500-5-1.500V1.500" strokeWidth="1.200" /><path d="M8.500 11.500h7M12 8v7" strokeWidth="2" /></Svg></button>
    </nav>
  );
}

function StatusBar() {
  return (
    <div className="relative flex h-[21px] shrink-0 justify-end bg-[#ebebeb] text-[#555]">
      <div role="tooltip" className={`${ui} absolute top-px left-[486px] z-10 border border-[#767676] bg-white px-[5px] text-xs leading-[18px] text-[#575757] shadow-[2px_2px_2px_rgba(0,0,0,0.5)]`}>YouTube</div>
      <div className="w-[127px] border-l border-[#cfcfcf]" />
      <div className="w-[27px] border-l border-[#cfcfcf]" />
      <div className="w-[27px] border-l border-[#cfcfcf]" />
      <div className="w-[47px] border-l border-[#cfcfcf]" />
      <div className="flex w-[72px] items-center justify-around border-l border-[#cfcfcf] px-1">
        <button aria-label="First sheet"><Svg w={8} h={8}><path d="M1 0v8" strokeWidth="1.500" /><path d="M7 0v8L2.500 4z" fill="currentColor" stroke="none" /></Svg></button>
        <button aria-label="Previous sheet"><Svg w={8} h={8}><path d="M6 0v8L2 4z" fill="currentColor" stroke="none" /></Svg></button>
        <button aria-label="Next sheet"><Svg w={8} h={8}><path d="M2 0v8L6 4z" fill="currentColor" stroke="none" /></Svg></button>
        <button aria-label="Last sheet"><Svg w={8} h={8}><path d="M7 0v8" strokeWidth="1.500" /><path d="M1 0v8L5.500 4z" fill="currentColor" stroke="none" /></Svg></button>
      </div>
      <div className="flex w-[66px] items-center justify-between border-l border-[#cfcfcf] pr-[5px] pl-[7px]">
        <button aria-label="Sheet sorter" className="text-[#bbb]"><Svg w={11} h={11}><path d="M0 1.500h11M0 5.500h11M0 9.500h11" strokeWidth="3" strokeDasharray="3 1" /></Svg></button>
        <button aria-label="Filmstrip" className="text-[#bbb]"><Svg w={11} h={11}><path d="M0 3.500h11" strokeWidth="7" /><path d="M0 9.500h11" strokeWidth="3" strokeDasharray="3 1" /></Svg></button>
        <button aria-label="Tabs view" className="size-[11px] bg-[#666]" />
      </div>
    </div>
  );
}

/* ---------- Windows taskbar ---------- */
function TaskButton({ label, className = "", bar, children }: { label: string; className?: string; bar?: string; children: React.ReactNode }) {
  return (
    <button aria-label={label} className={`relative flex w-[49px] shrink-0 items-center justify-center ${className}`}>
      {children}
      {bar && <span className={`absolute bottom-0 h-0.5 bg-[#76b9ed] ${bar}`} />}
    </button>
  );
}
function Taskbar() {
  return (
    <footer className={`${ui} flex h-[39px] shrink-0 bg-[#2f3235] text-white`}>
      <button aria-label="Start" className="flex w-12 shrink-0 items-center justify-center"><svg width="16" height="16" viewBox="0 0 16 16" fill="#fff"><path d="M0 2.300L6.800 1.300V7.600H0zM7.600 1.200L16 0V7.600H7.600zM0 8.400h6.800v6.300L0 13.700zM7.600 8.400H16V16l-8.400-1.200z" /></svg></button>
      <label className="flex w-[344px] shrink-0 items-center bg-[#f2f2f2] pr-3.5 pl-[9px] text-black">
        <Svg w={22} h={22}><circle cx="11" cy="11" r="9" strokeWidth="2.800" /></Svg>
        <input aria-label="Search" placeholder="Type here to search" className="ml-[9px] min-w-0 flex-1 bg-transparent text-sm placeholder:text-[#333]" />
        <Svg w={13} h={18}><rect x="4" y="1" width="5" height="10" rx="2.500" strokeWidth="1.200" /><path d="M1.500 8v1.500a5 5 0 0 0 10 0V8M6.500 14.500V17M4 17h5" strokeWidth="1.200" /></Svg>
      </label>
      <TaskButton label="Task view"><Svg><path d="M1.500 1v2.500h10V1M1.500 6.500h10v5h-10zM1.500 17v-2.500h10V17M15.500 1v4M15.500 11v6" strokeWidth="1.300" /><path d="M14 7h3v3h-3z" fill="#fff" stroke="none" /></Svg></TaskButton>
      <TaskButton label="Edge" className="ml-px">
        <svg width="24" height="24" viewBox="0 0 24 24"><defs><linearGradient id="eg" x1="0" x2="1"><stop offset="0" stopColor="#1b9de2" /><stop offset="1" stopColor="#5fe05a" /></linearGradient></defs><path d="M0 11C1 4 6 0 12 0c7 0 12 5 12 10 0 4-3 6-6 6-3 0-5-1-4-3 2-3-1-6-4-6C5 7 1 9 0 11z" fill="url(#eg)" /><path d="M0 12c0-3 4-6 8-5-4 3-5 8-2 12 1 2 4 4 7 5C5 24.500 0 19 0 12z" fill="#0d63b8" /><path d="M9 12c-2 5 2 9 8 8 2 0 4-1 5-2-2 4-5 6-9 6-4-1-8-6-6-11 .5-1 1-2 2-3z" fill="#1283d6" /></svg>
      </TaskButton>
      <TaskButton label="YouTube" className="bg-[#45484b]"><svg width="24" height="18" viewBox="0 0 24 18"><rect width="24" height="17" y=".5" rx="4" fill="#f00" /><path d="M9.500 5.500v7L16 9z" fill="#fff" /></svg></TaskButton>
      <TaskButton label="Chrome"><svg width="24" height="24" viewBox="0 0 24 24"><circle cx="12" cy="12" r="12" fill="#fbc116" /><path d="M1.600 6A12 12 0 0 1 22.400 6H12a6 6 0 0 0-5.200 3z" fill="#e33b2e" /><path d="M1.600 6A12 12 0 0 0 12 24l5.200-9A6 6 0 0 1 6.800 15z" fill="#109d58" /><circle cx="12" cy="12" r="5.800" fill="#fff" /><circle cx="12" cy="12" r="4.500" fill="#1a73e8" /></svg></TaskButton>
      <TaskButton label="File Explorer" bar="inset-x-1"><svg width="22" height="20" viewBox="0 0 22 20"><path d="M0 1h8l2 2h12v15H0z" fill="#f3c74f" /><path d="M0 5h22v13H0z" fill="#fbe29a" /><path d="M4 19v-8h14v8h-4v-4H8v4z" fill="#3fa9e5" /></svg></TaskButton>
      <TaskButton label="Microsoft Store"><svg width="24" height="24" viewBox="0 0 24 24"><path d="M7.500 7V1.500h9V7" fill="none" stroke="#ddd" strokeWidth="1.800" /><path d="M1 6h22v18H1z" fill="#f5f5f5" /><path d="M7 10.500h4.500V15H7z" fill="#f25022" /><path d="M12.500 10.500H17V15h-4.500z" fill="#7fba00" /><path d="M7 16h4.500v4.500H7z" fill="#00a4ef" /><path d="M12.500 16H17v4.500h-4.500z" fill="#ffb900" /></svg></TaskButton>
      <TaskButton label="VLC"><svg width="20" height="24" viewBox="0 0 20 24"><path d="M1 18h18l1 6H0z" fill="#ef7d0b" /><path d="M8.500 1h3l4.500 18c-3 2-9 2-12 0z" fill="#f58a16" /><path d="M7.500 5.500h5l1 4h-7zM5.500 13h9l1 3.500c-3 1.500-8 1.500-11 0z" fill="#f4f4f4" /></svg></TaskButton>
      <TaskButton label="Tableau" className="bg-[#5d6265]" bar="inset-x-0"><span className="flex size-6 items-center justify-center bg-[#f3f6f9]"><TableauMark colors={blueMark} size={20} /></span></TaskButton>
      <TaskButton label="Cube" bar="inset-x-1"><svg width="24" height="26" viewBox="0 0 24 26"><path d="M6 3v8" stroke="#000" strokeWidth="1" /><path d="M3 11l4-4h11l-4 4z" fill="#00f" stroke="#000" /><path d="M2.500 11.500h11v11h-11z" fill="#f00" stroke="#000" /><path d="M14 11l4-4v11l-4 4.500z" fill="#0c0" stroke="#000" /><circle cx="5" cy="3" r="2.500" fill="#ffe600" /><circle cx="8" cy="3.500" r="1.500" fill="#fff" /><circle cx="20" cy="15" r="2" fill="#ffe600" /><path d="M20 12v7M17 15.500h6" stroke="#ffe600" /></svg></TaskButton>
      <div className="flex-1" />
      <div className="flex shrink-0 items-center">
        <button aria-label="People" className="mr-[18px]"><Svg w={16} h={18}><circle cx="5" cy="8" r="2.500" strokeWidth="1.200" /><path d="M1 16c0-7 8-7 8 0M11 9.500c2 0 4 1.500 4 4.500" strokeWidth="1.200" /><circle cx="11" cy="4.500" r="3" strokeWidth="1.200" /></Svg></button>
        <button aria-label="Show hidden icons" className="mr-2.5 ml-1"><Svg w={12} h={8}><path d="M.5 7L6 1.500 11.500 7" strokeWidth="1.400" /></Svg></button>
        <button aria-label="Battery" className="mr-2"><Svg w={16} h={10}><path d="M1.500 1.500h11v7h-11zM14.500 3.500v3" strokeWidth="1.300" /><path d="M3 3h5v4H3z" fill="#fff" stroke="none" /></Svg></button>
        <button aria-label="Volume" className="mr-2.5"><Svg w={17} h={14}><path d="M1 5h2.500L7 1.500v11L3.500 9H1zM9.500 5c1 1 1 3 0 4M11.500 3c2 2 2 6 0 8M13.500 1.500c3 3 3 8 0 11" /></Svg></button>
        <button aria-label="Network" className="mr-2"><Svg w={14} h={14}><path d="M1 11A12 12 0 0 1 12 1.500M3.500 12.500A10 10 0 0 1 12.500 5M6.500 13A6.500 6.500 0 0 1 13 8.500M9.500 13A4 4 0 0 1 13 11.500" strokeWidth="1.300" /></Svg></button>
        <button className="w-[26px] text-xs">ENG</button>
        <time className="ml-2.5 flex w-[60px] flex-col items-center text-[11px] leading-[18px] whitespace-nowrap"><span>08:41</span><span>16-10-2023</span></time>
        <button aria-label="Notifications" className="mr-[22px] ml-4"><Svg w={18} h={18}><path d="M1.500 1.500h15v12h-4l-3 3v-3h-8z" strokeWidth="1.200" /></Svg></button>
        <div className="h-[39px] w-px bg-[#55585a]" />
      </div>
    </footer>
  );
}

const menus = ["File", "Data", "Worksheet", "Dashboard", "Story", "Analysis", "Map", "Format", "Server", "Window", "Help"];

export default function App() {
  return (
    <div className="flex h-screen flex-col overflow-hidden bg-white">
      <header className={`${ui} shrink-0 text-xs text-black`}>
        <div className="flex h-[23px] items-center pl-0.5">
          <TableauMark colors={blueMark} size={15} />
          <span className="ml-1.5 flex-1">Tableau - subscriber glory project</span>
          <div className="flex items-center gap-[34px] pr-[19px] pb-[3px]">
            <button aria-label="Minimize"><Svg w={11} h={11}><path d="M0 5.500h10" /></Svg></button>
            <button aria-label="Restore"><Svg w={11} h={11}><path d="M.5 2.500h7v7h-7zM2.500 2.500v-2h7v7h-2" strokeWidth="1.200" /></Svg></button>
            <button aria-label="Close"><Svg w={11} h={11}><path d="M.5.5l10 10M10.500.5l-10 10" strokeWidth="1.200" /></Svg></button>
          </div>
        </div>
        <nav aria-label="Menu" className="flex h-5 items-center gap-[13px] pt-0.5 pl-2">
          {menus.map((m) => <button key={m}>{m}</button>)}
        </nav>
      </header>
      <Toolbar />
      <div className="flex min-h-0 flex-1">
        <LeftPanel />
        <Canvas />
      </div>
      <SheetTabs />
      <StatusBar />
      <Taskbar />
    </div>
  );
}
